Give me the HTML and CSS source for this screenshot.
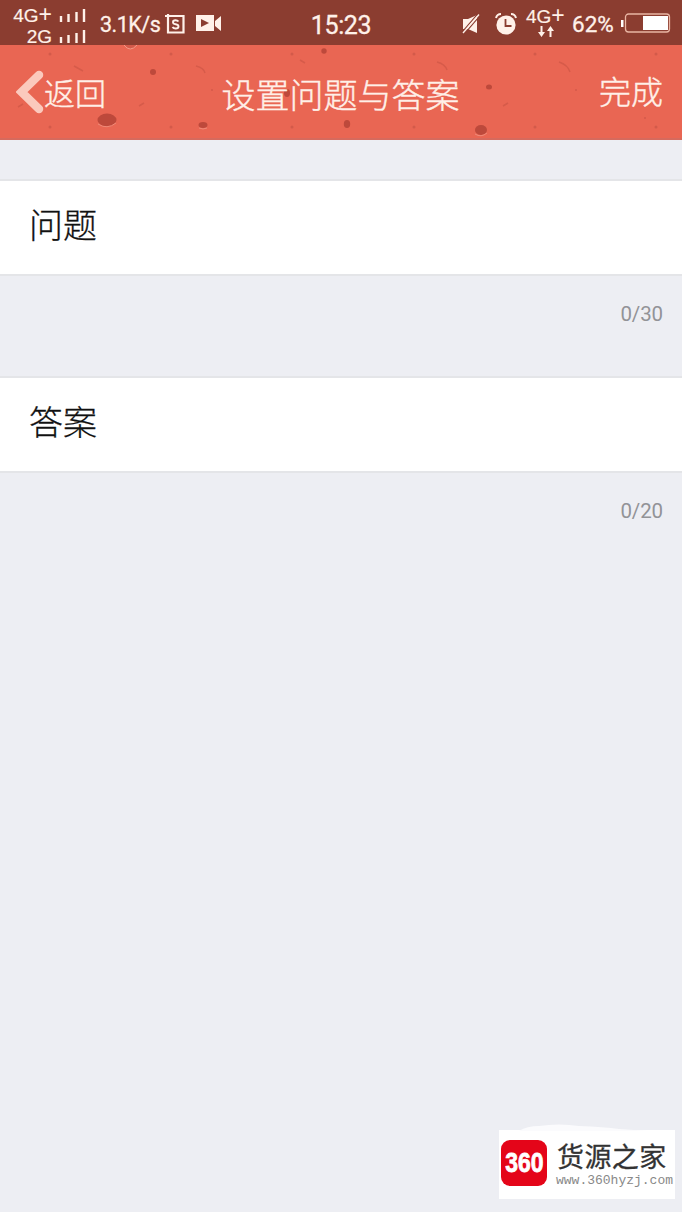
FILE: index.html
```html
<!doctype html>
<html lang="zh-CN">
<head>
    <meta charset="utf-8" />
    <title>设置问题与答案</title>
    <link rel="stylesheet" href="styles.css">
</head>
<body>
    <div class="status">
        <div class="left">
            <div class="signal">
                <p><span>4G<i>+</i></span><svg width="28" height="14" viewBox="0 0 28 14"><path d="M2 7v6M9.500 5v8M17.500 3v10M25 0v13"/></svg></p>
                <p><span>2G</span><svg width="28" height="14" viewBox="0 0 28 14"><path d="M2 7v6M9.500 5v8M17.500 3v10M25 0v13"/></svg></p>
            </div>
            <span class="speed">3.1K/s</span>
            <svg class="shot" width="20" height="22" viewBox="0 0 20 22">
                <path d="M0 3H18.500V19.500H3V1" fill="none" stroke="#fff1e9" stroke-width="2.200"/>
                <path d="M13.500 8.500Q12.500 7.300 10.500 7.300Q8 7.300 8 9.200Q8 10.800 10.700 11.200Q13.500 11.600 13.500 13.400Q13.500 15.500 10.700 15.500Q8.500 15.500 7.500 14" fill="none" stroke="#fff1e9" stroke-width="1.900"/>
            </svg>
            <svg class="video" width="26" height="18" viewBox="0 0 26 18">
                <path d="M0 0h18v16H0zM19 6l6-5v15l-6-5z" fill="#fff1e9"/>
                <path d="M5 4l8 4-8 4z" fill="#8b3d30"/>
            </svg>
        </div>
        <span class="time">15:23</span>
        <div class="right">
            <svg width="19" height="20" viewBox="0 0 19 20">
                <path d="M1 5h5l9-4v18l-9-4H1z" fill="#fff1e9"/>
                <path d="M2.300 19.800L18.300 1.300" stroke="#8b3d30" stroke-width="1.200"/>
                <path d="M-0.300 18.500L15.700 0" stroke="#8b3d30" stroke-width="1.200"/>
                <path d="M1 19L17 0.500" stroke="#fff1e9" stroke-width="1.400"/>
            </svg>
            <svg class="alarm" width="22" height="22" viewBox="0 0 22 22">
                <circle cx="11" cy="12" r="9.600" fill="#fff1e9"/>
                <path d="M1 5Q2 1 6 1M16 1Q20 1 21 5" fill="none" stroke="#fff1e9" stroke-width="2"/>
                <path d="M10.500 6v7h6" fill="none" stroke="#8b3d30" stroke-width="1.800"/>
            </svg>
            <div class="net">
                <span>4G<i>+</i></span>
                <svg width="16" height="11" viewBox="0 0 16 11">
                    <path d="M3.500 0v7M12.500 4v7" stroke="#fff1e9" stroke-width="2"/>
                    <path d="M0 6h7l-3.500 5zM9 5h7l-3.500-5z" fill="#fff1e9"/>
                </svg>
            </div>
            <span class="percent">62%</span>
            <svg class="battery" width="50" height="20" viewBox="0 0 50 20">
                <rect x="4.500" y="1" width="44" height="18" rx="3" fill="none" stroke="#e9b5a3" stroke-width="1.300"/>
                <path d="M22 3h25v14H22zM0 7h2.500v7H0z" fill="#fff"/>
            </svg>
        </div>
    </div>

    <div class="header">
        <svg class="dots" width="682" height="95" viewBox="0 0 682 95">
            <g fill="#bd493b">
                <ellipse cx="107" cy="75" rx="9.500" ry="6.500"/>
                <ellipse cx="203" cy="80" rx="4.500" ry="3"/>
                <ellipse cx="153" cy="27" rx="3" ry="3"/>
                <ellipse cx="347" cy="79" rx="3.200" ry="4"/>
                <ellipse cx="324" cy="6" rx="2.700" ry="2.700"/>
                <ellipse cx="287" cy="48" rx="3" ry="4"/>
                <ellipse cx="489" cy="42" rx="3" ry="2.500"/>
                <ellipse cx="481" cy="85" rx="6" ry="5"/>
            </g>
            <path d="M124 0q6 8 13 0" fill="#d35a4a" stroke="#f49a88"/>
            <path d="M98 79q9 6 18-1M199 83q4 2 8 0M475 89q6 4 12-1" fill="none" stroke="#f08a78"/>
            <g fill="#d35a4a">
                <circle cx="50" cy="9" r="1.500"/><circle cx="171" cy="9" r="1.500"/>
                <circle cx="292" cy="9" r="1.500"/><circle cx="414" cy="9" r="1.500"/>
                <circle cx="535" cy="9" r="1.500"/><circle cx="656" cy="9" r="1.500"/>
                <circle cx="50" cy="82" r="1.500"/><circle cx="171" cy="82" r="1.500"/>
                <circle cx="292" cy="82" r="1.500"/><circle cx="414" cy="82" r="1.500"/>
                <circle cx="535" cy="82" r="1.500"/><circle cx="656" cy="82" r="1.500"/>
                <circle cx="90" cy="45" r="1"/><circle cx="212" cy="45" r="1"/>
                <circle cx="576" cy="45" r="1"/><circle cx="645" cy="73" r="1"/>
            </g>
            <path d="M74 21l9 5M196 21q8 2 9 7M300 15l5 3M437 17q8 2 10 8M559 17q9 3 11 10M18 62l5-3M139 61l5-3M381 61l6-3M503 61l5-3" fill="none" stroke="#d65b4a" stroke-width="1.500"/>
        </svg>
        <a class="back" href="#">
            <svg width="28" height="44" viewBox="0 0 28 44"><path d="M23 5L5.500 22L23 39" fill="none" stroke="#fbc9bd" stroke-width="8.500" stroke-linecap="round"/></svg>
            <span>返回</span>
        </a>
        <h1>设置问题与答案</h1>
        <a class="done" href="#">完成</a>
    </div>

    <div class="form">
        <div class="row">问题</div>
        <p class="count">0/30</p>
        <div class="row">答案</div>
        <p class="count">0/20</p>
    </div>

    <div class="mark">
        <svg class="cloud" width="150" height="7" viewBox="0 0 150 7"><path d="M10 7q8-5 20-5q20-3 40 0q25 1 40 3l30 2z" fill="#fbfbfd"/></svg>
        <div class="logo"><span>360</span></div>
        <div class="site">
            <strong>货源之家</strong>
            <span>www.360hyzj.com</span>
        </div>
    </div>
</body>
</html>
```

FILE: styles.css
```css
body{
    margin:0;
    min-height:1212px;
    background-color:#edeef3;
    font-family:Roboto, "Noto Sans CJK SC", sans-serif;
    position:relative;
}
p, h1{
    margin:0;
    font-weight:normal;
}
a{
    color:inherit;
    text-decoration:none;
}
svg{
    display:block;
    flex:none;
}
.status{
    display:grid;
    grid-template-columns:1fr auto 1fr;
    align-items:center;
    height:45px;
    box-sizing:border-box;
    padding:0 11px;
    background-color:#8b3d30;
    color:#fff1e9;
}
.left, .right{
    display:flex;
    align-items:center;
}
.right{
    justify-content:flex-end;
}
.signal{
    width:76px;
    padding-top:5px;
}
.signal p{
    display:flex;
    justify-content:flex-end;
    align-items:center;
    height:21px;
    font:19px/21px "Liberation Sans", sans-serif;
    -webkit-text-stroke:0.2px;
}
.signal svg{
    margin-left:7px;
}
.signal path{
    stroke:#fff1e9;
    stroke-width:2.4;
}
.signal i, .net i{
    font:300 23px/10px "Liberation Sans", sans-serif;
    -webkit-text-stroke:0;
}
.speed{
    width:65px;
    margin-left:13px;
    padding-top:1px;
    font-size:21.5px;
    letter-spacing:-0.5px;
    -webkit-text-stroke:0.3px;
}
.video{
    margin-left:11px;
}
.time{
    padding-top:4px;
    font-size:25px;
    letter-spacing:-0.4px;
    -webkit-text-stroke:0.3px;
}
.alarm{
    margin-left:14px;
}
.net{
    width:41px;
    margin-left:9px;
    padding-bottom:4px;
    font:19px/19px "Liberation Sans", sans-serif;
    -webkit-text-stroke:0.2px;
}
.net span{
    display:block;
    white-space:nowrap;
}
.net svg{
    margin-left:12px;
}
.percent{
    width:44px;
    margin-left:5px;
    padding-top:1px;
    font-size:22.5px;
    -webkit-text-stroke:0.3px;
}
.battery{
    margin:0 0 1px 5px;
}
.header{
    display:grid;
    grid-template-columns:1fr auto 1fr;
    align-items:center;
    height:95px;
    box-sizing:border-box;
    padding:0 19px 0 16px;
    border-bottom:2px solid #d66a5d;
    background-color:#e96653;
    color:#fff0e8;
    font-weight:300;
    -webkit-text-stroke:0.4px;
    position:relative;
}
.dots{
    position:absolute;
    left:0;
    top:0;
}
.back, .header h1, .done{
    position:relative;
}
.back{
    display:flex;
    align-items:center;
    font-size:31px;
}
.header h1{
    padding:3px 0 0 2px;
    font-size:34px;
    font-weight:300;
}
.done{
    padding-bottom:4px;
    font-size:32px;
    text-align:right;
}
.form{
    padding-top:39px;
}
.row{
    height:97px;
    box-sizing:border-box;
    padding-left:29px;
    border-top:2px solid #e4e5e8;
    border-bottom:2px solid #e4e5e8;
    background-color:#fff;
    color:#111;
    font-size:34px;
    font-weight:300;
    line-height:90px;
    -webkit-text-stroke:0.3px;
}
.count{
    height:100px;
    box-sizing:border-box;
    padding:26px 19px 0 0;
    color:#929397;
    font-size:20.5px;
    letter-spacing:-0.1px;
    line-height:24px;
    text-align:right;
}
.mark{
    display:flex;
    align-items:center;
    position:absolute;
    left:499px;
    top:1130px;
    width:176px;
    height:69px;
    background-color:#fff;
}
.cloud{
    position:absolute;
    left:10px;
    top:-6px;
}
.logo{
    width:46px;
    height:46px;
    margin:0 0 3px 2px;
    border-radius:9px;
    background-color:#e40519;
    color:#fff;
    font:bold 28px/46px "Liberation Sans", sans-serif;
    text-align:center;
}
.logo span{
    display:block;
    transform:scaleX(0.82);
    -webkit-text-stroke:0.8px #fff;
}
.site{
    margin-left:9px;
}
.site strong{
    display:block;
    padding:2px 0 0 1px;
    color:#333;
    font-size:27px;
    font-weight:400;
    letter-spacing:0.4px;
    line-height:30px;
    white-space:nowrap;
    -webkit-text-stroke:0.3px;
}
.site span{
    display:block;
    color:#888;
    font:13px/16px "Liberation Mono", monospace;
}
```
